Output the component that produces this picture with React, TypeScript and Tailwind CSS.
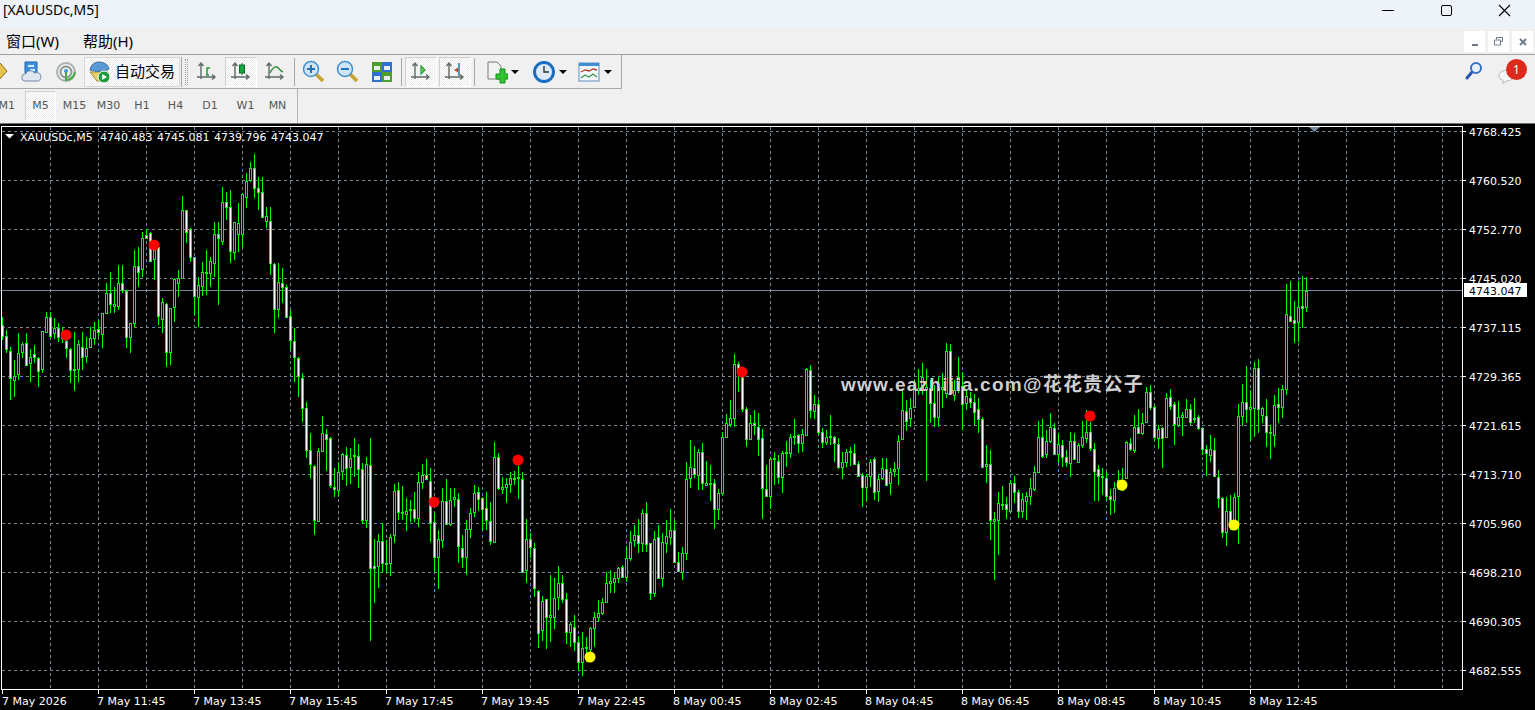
import React from 'react';

// candle rows are [wickTop, bodyTop, bodyBottom, wickBottom, bull] read off 3x crops
type Row = [number, number, number, number, number];

const sectionA: Row[] = [
  [560,585,618,630,0],[600,617,658,670,0],[650,662,745,810,0],[690,738,750,800,1],[610,670,733,750,1],[635,643,667,685,1],
  [610,640,705,705,0],[658,680,700,755,1],[645,673,682,700,0],[680,685,723,770,0],[603,603,718,730,1],[545,562,605,605,1],
  [545,562,617,625,0],[565,593,610,628,1],[580,593,620,635,0],[590,605,625,640,1],[600,632,655,685,0],[655,658,720,760,0],
  [605,716,720,782,1],[630,643,718,755,1],[605,652,680,720,0],[620,655,677,700,1],[590,625,652,650,1],[575,600,625,645,1],
  [570,597,607,620,0],[550,550,612,655,1],[460,490,550,550,1],[425,490,523,550,0],[470,523,529,550,1],[405,460,527,540,1],
  [405,460,480,490,0],[480,482,622,655,0],[580,580,622,670,1],[360,408,578,590,1],[350,408,425,470,0],[305,325,418,440,1],
  [297,316,323,325,0],[305,310,394,395,0],[355,360,388,450,1],[350,352,558,585,0],[505,517,566,610,1],[520,523,667,710,0],
  [533,535,667,705,1],[445,447,530,575,1],[420,445,458,500,1],[198,240,445,445,1],[240,240,307,340,0],[295,298,380,395,0],
  [380,382,497,555,0],[440,466,500,592,1],[395,425,467,497,1],[360,425,430,495,0],[380,393,430,470,1],[275,313,398,440,1],
  [275,313,325,525,0],[170,217,332,345,1],[185,217,230,270,0],[180,230,362,400,0],[275,277,365,390,1],[220,280,313,365,1],
  [190,193,313,350,1],[130,152,200,235,1],[95,115,150,155,1],[72,115,175,205,0],[140,175,185,240,0],[140,185,260,260,0],
  [230,257,273,295,1],[230,273,400,435,0],[400,403,537,610,0],[400,457,537,565,1],[415,460,472,520,0],[465,472,562,560,0],
];

const sectionB: Row[] = [
  [30,47,120,150,0],[85,122,172,245,0],[172,175,228,290,0],[220,235,325,365,0],[305,325,450,475,0],[400,450,492,535,0],
  [495,497,660,705,0],[445,452,662,665,1],[348,400,452,455,1],[388,403,418,512,0],[412,413,556,565,0],[505,560,568,590,0],
  [485,515,570,590,1],[460,462,512,540,1],[442,465,505,557,0],[445,475,502,553,1],[415,466,469,530,1],[432,467,507,565,0],
  [490,507,660,672,0],[470,493,660,685,1],[415,494,805,1022,0],[718,798,805,910,0],[703,722,798,865,1],[670,722,790,820,0],
  [720,790,793,820,1],[703,710,788,827,1],[552,572,705,730,1],[546,570,636,660,0],[558,636,640,660,1],[595,632,643,692,1],
  [600,628,630,665,1],[575,627,655,665,0],[515,545,655,680,1],[492,525,545,567,1],[478,525,537,540,0],[505,542,668,725,0],
  [640,665,772,815,0],[690,718,772,868,1],[565,602,720,745,1],[538,602,672,675,0],[565,600,673,677,1],[565,592,596,620,1],
  [580,597,738,790,0],[705,745,772,803,0],[660,688,772,826,1],[625,638,688,715,1],[555,580,635,652,1],[562,577,598,632,0],
  [590,595,628,690,0],[577,625,660,690,0],[605,662,723,735,0],[427,472,725,728,1],[460,470,565,570,0],[530,562,566,582,1],
  [535,553,562,610,1],[517,535,553,580,1],[513,534,538,555,1],[497,530,535,598,1],[517,538,817,820,0],[657,716,810,848,1],
  [700,716,742,775,0],[730,743,865,890,0],[870,872,1000,1043,0],[888,902,990,1022,1],[897,898,952,1048,0],[825,945,950,1025,1],
  [835,895,950,988,1],[797,850,890,930,1],[825,850,898,910,0],[878,898,997,1032,0],[965,973,997,1042,1],[945,980,1025,1052,0],
  [1008,1027,1085,1112,0],[997,1045,1085,1127,1],[1010,1042,1045,1085,1],[980,985,1048,1062,1],[935,950,985,1040,1],
  [900,940,950,965,1],[895,905,940,945,1],[815,848,905,905,1],[810,843,848,880,1],[820,835,845,880,1],[800,805,835,850,1],
];

const sectionC: Row[] = [
  [705,710,740,745,0],[648,683,740,755,1],[603,635,683,693,1],[585,616,630,650,1],[568,616,640,668,0],[538,550,640,665,1],
  [517,550,643,665,0],[638,638,790,810,0],[603,628,790,800,1],[585,622,743,745,0],[608,637,743,770,1],[570,618,638,670,1],
  [537,600,620,645,1],[570,600,695,697,0],[665,697,722,725,0],[650,670,725,750,1],[397,448,670,690,1],[330,412,445,475,1],
  [348,415,433,445,0],[358,367,435,480,1],[340,367,460,480,0],[393,460,464,465,1],[405,460,463,512,1],[447,460,538,597,0],
  [477,490,538,570,1],[305,322,490,495,1],[252,280,320,320,1],[210,265,282,290,1],[72,103,265,290,1],[97,103,115,185,0],
  [115,140,236,245,0],[232,238,328,350,0],[255,278,328,330,1],[240,278,286,315,0],[250,290,328,378,0],[297,325,475,567,0],
  [405,478,497,500,0],[380,388,497,537,1],[367,385,388,465,1],[375,392,440,462,0],[362,370,442,488,1],[332,367,370,410,1],
  [312,320,368,385,1],[268,317,320,345,1],[312,314,340,368,0],[298,313,338,365,1],[115,118,315,318,1],[105,120,240,265,0],
  [195,223,242,267,1],[210,223,305,315,0],[293,305,335,353,0],[300,322,335,345,1],[255,318,322,345,1],[317,322,340,395,0],
  [325,343,410,417,0],[365,397,410,447,1],[358,367,397,410,1],[350,362,367,408,1],[342,368,403,400,0],[392,403,438,440,0],
  [430,435,470,530,0],[432,438,470,512,1],[388,395,438,470,1],[382,388,485,510,0],[435,448,482,515,1],[385,413,445,450,1],
  [385,416,466,467,0],[413,425,460,495,1],[397,418,422,440,1],[315,332,415,465,1],[180,240,328,330,1],[210,242,272,302,0],
  [205,233,265,290,1],[150,175,232,235,1],[118,175,180,195,1],[100,140,180,195,1],[118,170,178,452,1],[150,175,218,280,0],
  [165,218,260,290,0],[140,175,260,290,1],
];

const sectionD: Row[] = [
  [130,172,176,235,1],[40,62,190,205,1],[42,62,188,192,0],[150,180,195,212,1],[82,140,180,190,1],[125,168,222,300,0],
  [180,197,220,240,1],[185,205,215,235,0],[192,215,245,285,0],[205,238,268,308,0],[262,266,412,412,0],[345,403,407,458,1],
  [360,402,570,630,0],[545,568,572,750,1],[487,520,570,675,1],[468,522,525,540,1],[500,523,536,567,0],[450,460,542,550,1],
  [438,460,485,520,0],[480,487,542,563,0],[490,508,542,565,1],[485,497,512,570,1],[445,475,497,525,1],[408,427,477,483,1],
  [273,320,427,430,1],[267,320,377,385,0],[300,333,373,383,1],[250,292,332,340,1],[280,295,372,375,0],[308,343,373,400,1],
  [330,344,380,410,0],[360,380,395,410,0],[305,333,400,440,1],[310,333,388,385,0],[340,345,395,390,1],[273,320,345,353,1],
  [240,307,325,340,1],[275,307,353,362,0],[340,358,422,513,0],[405,418,437,513,0],[415,437,440,495,1],[425,445,497,512,0],
  [478,497,508,555,0],[457,473,510,548,1],[420,450,473,480,1],[415,450,480,480,1],[333,335,445,447,1],[325,340,358,362,0],
  [255,292,360,370,1],[237,292,310,312,0],[250,278,308,315,1],[172,187,277,280,1],[165,187,230,240,0],[225,230,322,332,0],
  [285,298,323,357,1],[290,295,325,413,0],[190,203,322,325,1],[178,200,227,240,0],[217,223,282,345,0],[213,260,285,290,1],
  [245,255,262,318,1],[208,238,260,265,1],[222,238,275,285,0],[205,265,268,280,1],[255,260,293,300,0],[290,295,358,375,0],
  [345,358,370,437,0],[315,358,375,395,1],[325,360,438,440,0],[420,440,505,535,0],[500,505,605,625,0],[500,542,607,648,1],
  [495,542,585,600,0],[490,502,585,600,1],[222,257,497,642,1],[163,215,257,288,1],[108,215,238,280,0],[180,232,238,333,1],
  [97,115,235,322,1],[88,115,238,310,0],[230,235,255,280,1],[208,257,307,350,0],[285,307,309,387,1],[195,225,315,350,1],
  [175,222,230,280,0],
];

const sectionE: Row[] = [
  [375,388,440,475,1],[72,162,388,405,1],[62,168,183,185,0],[123,180,188,248,0],[63,142,185,245,1],[48,138,143,205,0],[52,92,140,155,1],
];

// each crop was scaled 3x, so a value maps to base + z / 3
const candles = [
  ...sectionA.map((r) => ({ r, base: 130 })),
  ...sectionB.map((r) => ({ r, base: 300 })),
  ...sectionC.map((r) => ({ r, base: 330 })),
  ...sectionD.map((r) => ({ r, base: 330 })),
  ...sectionE.map((r) => ({ r, base: 260 })),
].map(({ r, base }, i) => ({
  x: 2 + 4 * i,
  wickTop: Math.round(base + r[0] / 3),
  top: Math.round(base + r[1] / 3),
  bottom: Math.round(base + r[2] / 3),
  wickBottom: Math.round(base + r[3] / 3),
  bull: r[4] === 1,
}));

const prices = ['4768.425', '4760.520', '4752.770', '4745.020', '4737.115', '4729.365', '4721.615', '4713.710', '4705.960', '4698.210', '4690.305', '4682.555'];
const dates = ['7 May 2026', '7 May 11:45', '7 May 13:45', '7 May 15:45', '7 May 17:45', '7 May 19:45', '7 May 22:45', '8 May 00:45', '8 May 02:45', '8 May 04:45', '8 May 06:45', '8 May 08:45', '8 May 10:45', '8 May 12:45'];
const periods = [
  { label: 'M1', w: 'w-[15px] justify-end mr-[10px]' }, { label: 'M5', w: 'w-[31px] justify-center', active: true }, { label: 'M15', w: 'w-[37px] justify-center' }, { label: 'M30', w: 'w-[31px] justify-center' },
  { label: 'H1', w: 'w-[36px] justify-center' }, { label: 'H4', w: 'w-[31px] justify-center' }, { label: 'D1', w: 'w-[38px] justify-center' }, { label: 'W1', w: 'w-[33px] justify-center' }, { label: 'MN', w: 'w-[31px] justify-center' },
];
const redDots = [[66, 335], [154, 245], [434, 502], [518, 460], [742, 372], [1090, 416]];
const yellowDots = [[590, 657], [1122, 485], [1234, 525]];

function Axes() {
  return (
    <g fill="none" stroke="#5f6a66" strokeWidth="1.4">
      <path d="M6 3v16M3.5 6 6 3l2.5 3M2 17h18M17 14.5l3 2.5-3 2.5" />
    </g>
  );
}

function Icon({ children, w = 24 }: { children: React.ReactNode; w?: number }) {
  return (
    <svg width={w} height="24" viewBox={`0 0 ${w} 24`} className="block">
      {children}
    </svg>
  );
}

function ToolBtn({ children, active, w = 'w-[32px]' }: { children: React.ReactNode; active?: boolean; w?: string }) {
  return (
    <div className={`flex h-[30px] items-center justify-center ${w} ${active ? 'border border-[#d0d0d0] border-b-white border-r-white bg-[repeating-conic-gradient(#ffffff_0_25%,#ececec_0_50%)] bg-[length:2px_2px]' : ''}`}>
      {children}
    </div>
  );
}

function Sep() {
  return <div className="mx-[3px] h-[28px] w-px bg-[#a8a8a8]" />;
}

function Caret() {
  return <div className="ml-[3px] h-0 w-0 border-x-[4px] border-t-[4px] border-x-transparent border-t-black" />;
}

function MdiBtn({ children }: { children: React.ReactNode }) {
  return <div className="flex h-[21px] w-[21px] items-center justify-center bg-white">{children}</div>;
}

function Chart() {
  return (
    <svg width="1535" height="587" viewBox="0 123 1535 587" className="block font-['DejaVu_Sans',sans-serif] text-[11px]" shapeRendering="crispEdges">
      <rect x="0" y="123" width="1535" height="587" fill="#000" />
      <rect x="0" y="122" width="1535" height="2" fill="#6f6f6f" />
      {/* grid */}
      <g stroke="#778899" strokeDasharray="3 3">
        {prices.map((_, i) => (
          <line key={i} x1="2" x2="1462" y1={131.5 + 49 * i} y2={131.5 + 49 * i} />
        ))}
        {Array.from({ length: 30 }, (_, i) => (
          <line key={i} x1={50.5 + 48 * i} x2={50.5 + 48 * i} y1="127" y2="689" />
        ))}
      </g>
      <rect x="0" y="290" width="1463" height="1" fill="#778899" />
      {/* candles */}
      {candles.map((c) => (
        <g key={c.x}>
          <rect x={c.x} y={c.wickTop} width="1" height={Math.max(c.wickBottom - c.wickTop, 1)} fill="#00ff00" />
          <rect x={c.x - 1} y={c.top} width="3" height={Math.max(c.bottom - c.top, 1) + 1} fill="#00ff00" />
          {c.bottom - c.top > 1 && <rect x={c.x} y={c.top + 1} width="1" height={c.bottom - c.top - 1} fill={c.bull ? '#000' : '#fff'} />}
        </g>
      ))}
      <g shapeRendering="auto">
        {redDots.map(([x, y]) => (
          <circle key={x} cx={x} cy={y} r="5.5" fill="#ff0000" />
        ))}
        {yellowDots.map(([x, y]) => (
          <circle key={x} cx={x} cy={y} r="5.5" fill="#ffff00" />
        ))}
      </g>
      {/* frame */}
      <rect x="1" y="126" width="1462" height="1" fill="#fff" />
      <rect x="1" y="126" width="1" height="564" fill="#fff" />
      <rect x="1" y="689" width="1462" height="1" fill="#fff" />
      <rect x="1462" y="126" width="1" height="564" fill="#fff" />
      <path d="M1309 127h11l-5.5 5z" fill="#778899" shapeRendering="auto" />
      <path d="M5 134h9l-4.500 4.500z" fill="#fff" shapeRendering="auto" />
      {prices.map((p, i) => (
        <g key={p}>
          <rect x="1463" y={131 + 49 * i} width="3" height="1" fill="#fff" />
          <text x="1469" y={135.500 + 49 * i} fill="#fff">{p}</text>
        </g>
      ))}
      <rect x="1464" y="283" width="63" height="14" fill="#fff" />
      <text x="1469" y="294.500" fill="#000">4743.047</text>
      {dates.map((d, i) => (
        <g key={d}>
          <rect x={2 + 96 * i} y="690" width="1" height="4" fill="#fff" />
          <text x={2 + 96 * i - (i ? 1 : 0)} y="705" fill="#fff">{d}</text>
        </g>
      ))}
      <text x="20" y="140.500" fill="#fff">XAUUSDc,M5</text>
      <text x="100" y="140.500" fill="#fff" className="[word-spacing:1px]">4740.483 4745.081 4739.796 4743.047</text>
      <text x="841" y="391" fill="#cfcfcf" className="font-['Liberation_Sans','Noto_Sans_CJK_SC',sans-serif] text-[19px] font-bold tracking-[1.25px]" shapeRendering="auto">
        www.eazhijia.com@花花贵公子
      </text>
    </svg>
  );
}

export default function App() {
  return (
    <div className="flex h-[710px] w-[1535px] flex-col overflow-hidden bg-[#f0f0f0] font-['Noto_Sans','Noto_Sans_CJK_SC',sans-serif] text-black">
      {/* title bar */}
      <div className="flex h-[29px] items-center justify-between bg-[#eef3fa] pb-[9px] pl-[3px]">
        <span className="text-[14px] leading-none">[XAUUSDc,M5]</span>
        <div className="flex items-center">
          <div className="flex w-[59px] justify-center"><div className="h-px w-[12px] bg-black" /></div>
          <div className="flex w-[59px] justify-center"><div className="h-[11px] w-[11px] rounded-[2px] border border-black" /></div>
          <div className="flex w-[59px] justify-center pr-[3px]">
            <svg width="13" height="13" viewBox="0 0 13 13" stroke="#000" strokeWidth="1.100"><path d="M1 1l11 11M12 1 1 12" /></svg>
          </div>
        </div>
      </div>
      {/* menu */}
      <div className="flex h-[26px] items-center justify-between border-b border-[#a0a0a0] pl-[6px] pr-[2px]">
        <div className="flex gap-[24px] text-[15px] leading-none">
          <span>窗口(W)</span>
          <span>帮助(H)</span>
        </div>
        <div className="flex gap-[3px]">
          <MdiBtn><div className="mt-[6px] h-[2px] w-[6px] bg-[#6f7c8c]" /></MdiBtn>
          <MdiBtn>
            <svg width="9" height="9" viewBox="0 0 9 9" fill="none" stroke="#6f7c8c"><path d="M2.500 2.500v-2h6v4h-2M.5 3h6v5h-6z" /></svg>
          </MdiBtn>
          <MdiBtn>
            <svg width="8" height="8" viewBox="0 0 8 8" stroke="#6f7c8c" strokeWidth="2"><path d="M1 1l6 6M7 1 1 7" /></svg>
          </MdiBtn>
        </div>
      </div>
      {/* toolbar */}
      <div className="flex h-[34px]">
        <div className="flex h-[34px] w-[622px] items-center border-b border-r border-[#a8a8a8]">
          <div className="flex w-[84px] items-center overflow-hidden">
            <svg width="9" height="24" viewBox="0 0 9 24" className="shrink-0">
              <path d="M-8 11 0 3l7 8-8 9z" fill="#e8c050" stroke="#8a6a1c" />
            </svg>
            <svg width="22" height="24" viewBox="0 0 22 24" className="ml-[12px] shrink-0">
              <path d="M4 2h12v11H4z" fill="#3f8fe0" stroke="#1f62b0" />
              <path d="M7 5h6v2H7zM9 9h5v2H9z" fill="#d8ecff" />
              <path d="M4 21a3.500 3.500 0 0 1 .5-7 5 5 0 0 1 9-1 4 4 0 0 1 4 8z" fill="#dfe8f2" stroke="#6f86a6" />
            </svg>
            <svg width="22" height="24" viewBox="0 0 22 24" className="ml-[12px] shrink-0" fill="none">
              <circle cx="11" cy="12" r="9" stroke="#a9b0b0" strokeWidth="2" />
              <circle cx="11" cy="12" r="5.500" stroke="#8d9696" strokeWidth="2" />
              <circle cx="11" cy="11" r="2" fill="#3f8fe0" />
              <path d="M11 12v8c4 0 8-3 9-8" stroke="#49a84a" strokeWidth="2" />
            </svg>
          </div>
          <div className="flex h-[30px] w-[96px] items-center border border-[#d8d8d8] bg-[repeating-conic-gradient(#ffffff_0_25%,#ececec_0_50%)] bg-[length:2px_2px] pl-[3px]">
            <svg width="24" height="24" viewBox="0 0 24 24" className="shrink-0">
              <path d="M2 12 9 21h11V12z" fill="#e8cf6a" stroke="#a58a2c" />
              <path d="M2 10c1-6 5-8 9-8s9 2 10 7c-5 3-13 3-19 1z" fill="#5b9bd5" stroke="#3c6f9e" />
              <circle cx="16" cy="17" r="6" fill="#1e9b3c" stroke="#fff" />
              <path d="M14 14v6l5-3z" fill="#fff" />
            </svg>
            <span className="ml-[3px] text-[15px] leading-none">自动交易</span>
          </div>
          <div className="ml-[1px] h-[30px] w-px bg-[#a8a8a8]" />
          <div className="ml-[3px] h-[26px] w-[3px] border-x border-dotted border-[#a0a0a0]" />
          <div className="ml-[3px] flex items-center gap-[2px]">
            <ToolBtn>
              <Icon><Axes /><path d="M12 15V8h3M11 15h3" stroke="#1f9a3a" strokeWidth="1.500" fill="none" /></Icon>
            </ToolBtn>
            <ToolBtn active>
              <Icon><Axes /><path d="M13 3v12" stroke="#0f6b2c" /><rect x="10.500" y="5" width="5" height="8" fill="#16a53d" stroke="#0f6b2c" /></Icon>
            </ToolBtn>
            <ToolBtn>
              <Icon><Axes /><path d="M7 13c2-4 4-7 7-6 2 1 3 4 6 5" stroke="#3c8f45" strokeWidth="1.500" fill="none" /></Icon>
            </ToolBtn>
          </div>
          <Sep />
          <div className="flex items-center gap-[2px]">
            <ToolBtn>
              <Icon>
                <path d="M14 14l7 7" stroke="#c9a22e" strokeWidth="3.500" />
                <circle cx="9" cy="9" r="7.500" fill="#cfe6fa" stroke="#3f8fd0" strokeWidth="1.500" />
                <path d="M5 9h8M9 5v8" stroke="#2274bf" strokeWidth="2" />
              </Icon>
            </ToolBtn>
            <ToolBtn>
              <Icon>
                <path d="M14 14l7 7" stroke="#c9a22e" strokeWidth="3.500" />
                <circle cx="9" cy="9" r="7.500" fill="#cfe6fa" stroke="#3f8fd0" strokeWidth="1.500" />
                <path d="M5 9h8" stroke="#2274bf" strokeWidth="2" />
              </Icon>
            </ToolBtn>
            <ToolBtn>
              <Icon>
                <rect x="2" y="2" width="10" height="10" fill="#4f9d2f" />
                <rect x="12" y="2" width="10" height="10" fill="#2f6fd0" />
                <rect x="2" y="12" width="10" height="10" fill="#2f6fd0" />
                <rect x="12" y="12" width="10" height="10" fill="#4f9d2f" />
                <path d="M4 6h6v4H4zM14 6h6v4h-6zM4 16h6v4H4zM14 16h6v4h-6z" fill="#e6eef0" />
              </Icon>
            </ToolBtn>
          </div>
          <Sep />
          <div className="flex items-center gap-[2px]">
            <ToolBtn active>
              <Icon><Axes /><path d="M12 6v8l4-4z" fill="#7fd05a" stroke="#1f9a3a" strokeWidth="1.200" /></Icon>
            </ToolBtn>
            <ToolBtn active>
              <Icon><Axes /><path d="M16 3v13" stroke="#1f6f9a" strokeWidth="1.400" /><path d="M11 10l4-2.500v5z" fill="#d0451f" /></Icon>
            </ToolBtn>
          </div>
          <Sep />
          <div className="ml-[8px] flex items-center">
            <svg width="22" height="24" viewBox="0 0 22 24">
              <path d="M2 2h9l4 4v13H2z" fill="#f2f2f2" stroke="#7a7a7a" />
              <path d="M10 14h4v-5h5v5h3v5h-3v4h-5v-4h-4z" fill="#2ec52e" stroke="#169016" />
            </svg>
            <Caret />
            <svg width="24" height="24" viewBox="0 0 24 24" className="ml-[13px]">
              <circle cx="12" cy="12" r="9.500" fill="#dde9f6" stroke="#1a6dbf" strokeWidth="3" />
              <path d="M12 6v6h5" fill="none" stroke="#333" strokeWidth="1.400" />
            </svg>
            <Caret />
            <svg width="24" height="24" viewBox="0 0 24 24" className="ml-[10px]">
              <rect x="2" y="3" width="20" height="18" fill="#f4f8fc" stroke="#5a8ec0" />
              <rect x="2" y="3" width="20" height="3" fill="#3f8fd0" />
              <path d="M4 12l4-2 4 1 4-2 4 1" fill="none" stroke="#b0432a" strokeWidth="1.300" />
              <path d="M4 18l4-3 4 2 4-3 4 3" fill="none" stroke="#3c9a45" strokeWidth="1.300" />
            </svg>
            <Caret />
          </div>
        </div>
        <div className="flex flex-1 items-center justify-end pr-[4px]">
          <svg width="20" height="20" viewBox="0 0 20 20" className="mr-[17px] -mt-[2px]">
            <path d="M8 11l-5 6" stroke="#2a55b0" strokeWidth="3" strokeLinecap="round" />
            <circle cx="12" cy="7" r="5" fill="#e8f2fc" stroke="#3a6fc8" strokeWidth="2" />
          </svg>
          <div className="relative h-[30px] w-[30px]">
            <svg width="18" height="18" viewBox="0 0 22 18" className="absolute left-[-3px] top-[11px]">
              <path d="M10 1c5 0 9 3 9 6.500S15 14 10 14l-4 3v-4C3 12 1 10 1 7.500 1 4 5 1 10 1z" fill="#f6f6f6" stroke="#a8a8a8" />
            </svg>
            <div className="absolute left-[5px] top-[2px] flex h-[21px] w-[21px] items-center justify-center rounded-full bg-[#dd2a1c] text-[12px] leading-none text-white">1</div>
          </div>
        </div>
      </div>
      {/* period bar */}
      <div className="flex h-[34px] items-center">
        <div className="flex h-[34px] w-[298px] items-center overflow-hidden border-r border-[#b4b4b4] font-['DejaVu_Sans',sans-serif] text-[11px] text-[#555]">
          {periods.map((p) => (
            <div
              key={p.label}
              className={`flex h-[30px] shrink-0 items-center ${p.w} ${p.active ? 'border border-[#d0d0d0] border-b-white border-r-white bg-[repeating-conic-gradient(#ffffff_0_25%,#ececec_0_50%)] bg-[length:2px_2px]' : ''}`}
            >
              {p.label}
            </div>
          ))}
        </div>
      </div>
      <Chart />
    </div>
  );
}
